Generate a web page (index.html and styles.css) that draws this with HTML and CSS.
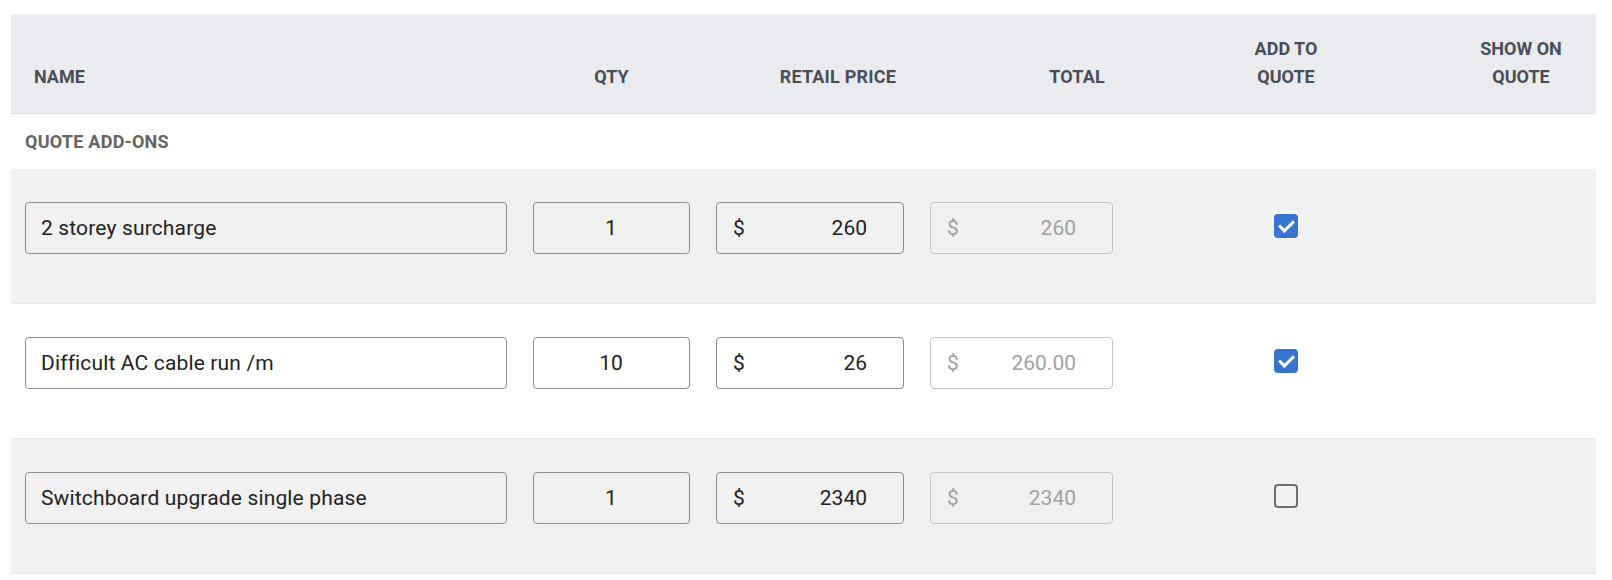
FILE: index.html
```html
<!DOCTYPE html>
<html>
<head>
	<meta charset="UTF-8">
	<title>Quote add-ons</title>
	<link rel="stylesheet" href="styles.css">
</head>
<body>
	<div class="quote-table">
		<div class="row head">
			<div class="cell name">Name</div>
			<div class="cell qty">Qty</div>
			<div class="cell price">Retail price</div>
			<div class="cell price">Total</div>
			<div class="cell check">Add to<br>quote</div>
			<div class="cell check">Show on<br>quote</div>
		</div>
		<div class="section">Quote add-ons</div>

		<div class="row item shaded">
			<div class="cell first"><input class="field text" type="text" value="2 storey surcharge"></div>
			<div class="cell"><input class="field num" type="text" value="1"></div>
			<div class="cell"><label class="money"><span>$</span><input type="text" value="260"></label></div>
			<div class="cell"><label class="money disabled"><span>$</span><input type="text" value="260" disabled></label></div>
			<div class="cell check"><input class="tick" type="checkbox" checked></div>
			<div class="cell check"></div>
		</div>

		<div class="row item">
			<div class="cell first"><input class="field text" type="text" value="Difficult AC cable run /m"></div>
			<div class="cell"><input class="field num" type="text" value="10"></div>
			<div class="cell"><label class="money"><span>$</span><input type="text" value="26"></label></div>
			<div class="cell"><label class="money disabled"><span>$</span><input type="text" value="260.00" disabled></label></div>
			<div class="cell check"><input class="tick" type="checkbox" checked></div>
			<div class="cell check"></div>
		</div>

		<div class="row item shaded">
			<div class="cell first"><input class="field text" type="text" value="Switchboard upgrade single phase"></div>
			<div class="cell"><input class="field num" type="text" value="1"></div>
			<div class="cell"><label class="money"><span>$</span><input type="text" value="2340"></label></div>
			<div class="cell"><label class="money disabled"><span>$</span><input type="text" value="2340" disabled></label></div>
			<div class="cell check"><input class="tick" type="checkbox"></div>
			<div class="cell check"></div>
		</div>
	</div>
</body>
</html>
```

FILE: styles.css
```css
body {
	margin: 0;
	padding: 14px 16px 0 11px;
	background: #fff;
	font-family: Roboto, "Liberation Sans", sans-serif;
	font-size: 18px;
	color: #222;
}
.quote-table {
	width: 1585px;
}
.row {
	display: grid;
	grid-template-columns: 509px 183px 214px 209px 320px 150px;
}
.head {
	background-color: #eaebee;
	border-bottom: 1px solid #dcdde1;
	padding: 21px 0 22px;
	align-items: end;
	font-weight: 700;
	line-height: 28px;
	color: #4a4e56;
	text-transform: uppercase;
}
.head .name {
	padding-left: 23px;
}
.head .qty {
	text-align: center;
}
.head .price {
	text-align: right;
	padding-right: 21px;
	letter-spacing: 0.2px;
}
.head .check {
	text-align: center;
}
.section {
	height: 55px;
	line-height: 56px;
	padding-left: 14px;
	font-weight: 700;
	color: #636363;
	text-transform: uppercase;
	letter-spacing: 0.25px;
}
.item {
	padding: 33px 0 49px;
	border-bottom: 1px solid #e6e6e6;
}
.shaded {
	background-color: #f1f1f1;
}
.item .cell {
	padding: 0 13px;
}
.item .first {
	padding-left: 14px;
}
.item .check {
	display: flex;
	align-items: center;
	justify-content: center;
	padding-bottom: 4px;
}
.field {
	box-sizing: border-box;
	width: 100%;
	height: 52px;
	padding: 0 15px;
	border: 1px solid #8c8c8c;
	border-radius: 4px;
	background: transparent;
	font-family: inherit;
	font-size: 21px;
	color: #222;
	outline: none;
}
.field.text {
	letter-spacing: 0.15px;
}
.num {
	text-align: center;
	padding: 0 16px 0 15px;
}
.money {
	box-sizing: border-box;
	display: flex;
	align-items: center;
	height: 52px;
	padding: 0 36px 0 16px;
	border: 1px solid #8c8c8c;
	border-radius: 4px;
	font-size: 21px;
}
.money input {
	flex: 1;
	min-width: 0;
	border: none;
	padding: 0;
	background: transparent;
	font-family: inherit;
	font-size: 21px;
	color: #222;
	text-align: right;
	outline: none;
}
.money.disabled {
	border-color: #c4c4c4;
	color: #a0a0a0;
}
.money.disabled input {
	color: #a0a0a0;
	-webkit-text-fill-color: #a0a0a0;
}
.tick {
	-webkit-appearance: none;
	appearance: none;
	position: relative;
	box-sizing: border-box;
	width: 24px;
	height: 24px;
	margin: 0;
	border: 2px solid #6e6e6e;
	border-radius: 4px;
	background: transparent;
}
.tick:checked {
	background-color: #3574d0;
	border-color: #3574d0;
}
.tick:checked::after {
	content: "";
	position: absolute;
	left: 6px;
	top: 1px;
	width: 6px;
	height: 12px;
	border: solid #fff;
	border-width: 0 3px 3px 0;
	transform: rotate(45deg);
}
```
